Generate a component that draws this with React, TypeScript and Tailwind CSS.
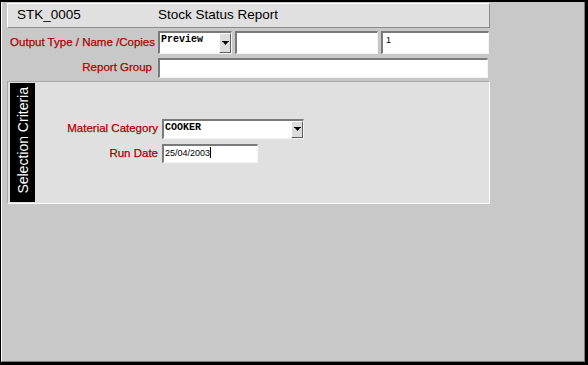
import React from 'react';

// Classic Oracle-Forms style report launcher screen

const labelCls = "text-[11.5px] text-[#b00000] whitespace-nowrap [-webkit-text-stroke:0.25px_#b00000]";
const sunken = "border-t-2 border-l-2 border-t-[#7a7a7a] border-l-[#7a7a7a] border-b border-r border-b-[#f4f4f4] border-r-[#f4f4f4] bg-white";

const DropArrow: React.FC = () => (
  <div className="w-[12px] h-full bg-[#dcdcdc] border-t border-l border-white border-b border-r border-b-[#606060] border-r-[#606060] flex items-center justify-center">
    <svg width="7" height="5" viewBox="0 0 7 5">
      <rect x="0" y="0" width="7" height="1" fill="#000" />
      <path d="M1 1 L6 1 L3.5 4 Z" fill="#000" />
    </svg>
  </div>
);

const Select: React.FC<{ value: string; width: string; height: string }> = ({ value, width, height }) => (
  <div className={`${sunken} ${width} ${height} flex`}>
    <div className="flex-1 pl-[1px] pt-[2px] text-[10px] font-bold leading-none text-black" style={{ fontFamily: '"Liberation Mono", monospace' }}>
      {value}
    </div>
    <DropArrow />
  </div>
);

const TextBox: React.FC<{ width: string; height: string; children?: React.ReactNode }> = ({ width, height, children }) => (
  <div className={`${sunken} ${width} ${height} pl-[1px] pt-[2px] text-[9px] leading-none text-black flex items-start`}>
    {children}
  </div>
);

export default function App() {
  return (
    <div className="w-[588px] h-[365px] border-t-2 border-l border-r-[3px] border-b-[3px] border-black overflow-hidden" style={{ fontFamily: '"Liberation Sans", Arial, sans-serif' }}>
      <div className="w-full h-full bg-[#c8c8c8] border-l border-white border-r border-b border-r-[#7c7c7c] border-b-[#7c7c7c] pl-[5px] pt-px">
        {/* title bar */}
        <div className="w-[483px] h-[25px] bg-[#e0e0e0] border-t border-l border-white border-b border-r border-b-[#8c8c8c] border-r-[#8c8c8c] flex items-center text-[13.5px] text-black">
          <span className="ml-[9px] w-[141px]">STK_0005</span>
          <span>Stock Status Report</span>
        </div>

        {/* output row */}
        <div className="mt-[3px] flex items-center h-[23px]">
          <div className={`${labelCls} w-[148px] text-right`}>Output Type / Name /Copies</div>
          <div className="ml-[3px] flex gap-[3px] items-center">
            <Select value="Preview" width="w-[74px]" height="h-[23px]" />
            <TextBox width="w-[143px]" height="h-[23px]" />
            <TextBox width="w-[108px]" height="h-[23px]">
              <span className="pl-[2px] pt-[1px]">1</span>
            </TextBox>
          </div>
        </div>

        {/* report group */}
        <div className="mt-[4px] flex items-center h-[20px]">
          <div className={`${labelCls} w-[145px] text-right`}>Report Group</div>
          <div className="ml-[6px]">
            <TextBox width="w-[330px]" height="h-[20px]" />
          </div>
        </div>

        {/* selection criteria panel */}
        <div className="mt-[3px] w-[483px] h-[123px] bg-[#e0e0e0] border-t border-l border-[#a8a8a8] border-b border-r border-b-white border-r-white pl-[2px] pt-[1px] pb-px flex">
          <div className="w-[25px] h-full bg-black flex items-center justify-center">
            <span className="text-white text-[14px] leading-none [writing-mode:vertical-rl] rotate-180 whitespace-nowrap -mt-[4px]">
              Selection Criteria
            </span>
          </div>
          <div className="pt-[36px] flex flex-col gap-[5px]">
            <div className="flex items-center h-[20px]">
              <div className={`${labelCls} w-[123px] text-right`}>Material Category</div>
              <div className="ml-[4px]">
                <Select value="COOKER" width="w-[142px]" height="h-[20px]" />
              </div>
            </div>
            <div className="flex items-center h-[19px]">
              <div className={`${labelCls} w-[123px] text-right`}>Run Date</div>
              <div className="ml-[4px]">
                <TextBox width="w-[96px]" height="h-[19px]">
                  <span className="pt-[1px]">25/04/2003</span>
                  <span className="w-px h-[11px] bg-black -mt-[1px]" />
                </TextBox>
              </div>
            </div>
          </div>
        </div>
      </div>
    </div>
  );
}
